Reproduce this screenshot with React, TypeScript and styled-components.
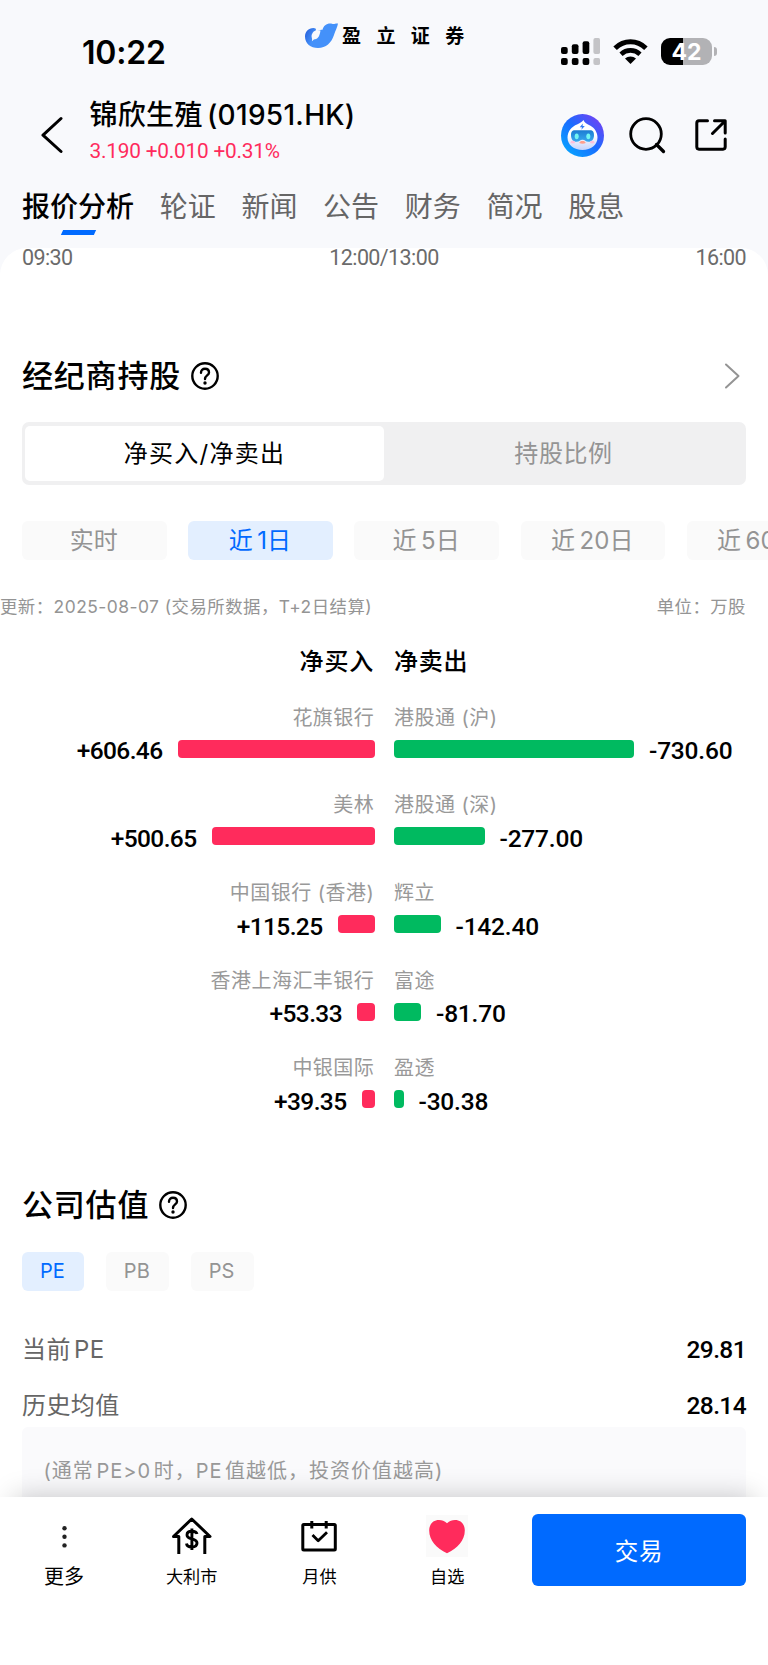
import React from 'react';
import styled, { createGlobalStyle, css } from 'styled-components';

const Global = createGlobalStyle`
  * { box-sizing: border-box; }
  html, body { margin: 0; padding: 0; background: #fff; }
  body {
    font-family: Inter, "Noto Sans CJK SC", sans-serif;
    color: #000;
    -webkit-font-smoothing: antialiased;
  }
  svg { display: block; flex: none; }
`;

const din = css`
  font-family: Roboto, "Noto Sans CJK SC", sans-serif;
`;

const Screen = styled.div`
  width: 768px;
  height: 1665px;
  display: flex;
  flex-direction: column;
  overflow: hidden;
  background: #f8f9fc;
`;

/* ---------- status bar ---------- */

const StatusBar = styled.header`
  height: 92px;
  flex: none;
  display: grid;
  grid-template-columns: 305px 1fr auto;
  padding-right: 51px;
`;

const Clock = styled.time`
  padding: 33px 0 0 82px;
  font-size: 32px;
  line-height: 40px;
  font-weight: 600;
  letter-spacing: -0.2px;
`;

const Brand = styled.div`
  display: flex;
  align-items: flex-start;
  gap: 3px;
  padding-top: 23px;
`;

const BrandName = styled.span`
  font-size: 19px;
  line-height: 28px;
  font-weight: 700;
  letter-spacing: 15.4px;
  white-space: nowrap;
`;

const StatusIcons = styled.div`
  display: flex;
  align-items: flex-start;
  padding-top: 38px;
`;

const WifiSlot = styled.div`
  margin: 1px 13px 0 13px;
`;

const Battery = styled.div`
  display: flex;
  align-items: center;
  gap: 2px;
  &::after {
    content: '';
    width: 3px;
    height: 9px;
    border-radius: 0 4px 4px 0;
    background: #b2b2b5;
  }
`;

const BatteryBody = styled.div`
  width: 51px;
  height: 27px;
  border-radius: 9px;
  background: linear-gradient(90deg, #000 43%, #b2b2b5 43%);
  color: #fff;
  font-size: 23px;
  line-height: 28px;
  font-weight: 700;
  text-align: center;
`;

/* ---------- title bar ---------- */

const TitleBar = styled.div`
  height: 88px;
  flex: none;
  display: flex;
  align-items: flex-start;
  padding: 0 41px;
`;

const BackSlot = styled.div`
  width: 48.5px;
  padding-top: 24px;
`;

const Stock = styled.div`
  flex: 1;
  padding-top: 3px;
`;

const StockName = styled.h1`
  margin: 0;
  font-size: 28px;
  line-height: 40px;
  font-weight: 500;
  word-spacing: -3.5px;
  letter-spacing: 0.3px;
`;

const Price = styled.div`
  ${din}
  margin-top: 3px;
  font-size: 20.8px;
  line-height: 26px;
  font-weight: 400;
  color: #ff2b5c;
  letter-spacing: -0.2px;
`;

const Actions = styled.div`
  display: flex;
  align-items: center;
  padding-top: 21.5px;
`;

const SearchSlot = styled.div`
  margin: 1px 29px 0 25px;
`;

/* ---------- tabs ---------- */

const Tabs = styled.nav`
  height: 68px;
  flex: none;
  display: flex;
  gap: 25.7px;
  padding: 7px 22px 0;
`;

const Tab = styled.a<{ $active?: boolean }>`
  display: flex;
  flex-direction: column;
  align-items: center;
  font-size: 28px;
  line-height: 40px;
  font-weight: ${p => (p.$active ? 500 : 400)};
  color: ${p => (p.$active ? '#000' : '#666')};
  white-space: nowrap;
`;

const TabMark = styled.span`
  width: 33px;
  height: 5px;
  margin: 3px 0 0 0;
  background: #006aff;
  transform: skewX(-24deg);
`;

/* ---------- content ---------- */

const Sheet = styled.main`
  flex: 1;
  min-height: 0;
  background: #fff;
  border-radius: 27px 27px 0 0;
  padding: 0 22px;
`;

const Axis = styled.div`
  ${din}
  height: 97px;
  display: grid;
  grid-template-columns: 1fr auto 1fr;
  font-size: 21.5px;
  line-height: 19px;
  color: #6b6b6b;
  letter-spacing: -0.6px;
  & > :last-child { text-align: right; }
`;

const SectionHead = styled.div<{ $pb: number }>`
  display: flex;
  align-items: center;
  height: ${p => 62 + p.$pb}px;
  padding: 0 6px ${p => p.$pb}px 0;
`;

const SectionTitle = styled.h2`
  margin: 0 10px 0 0;
  font-size: 31px;
  line-height: 44px;
  font-weight: 500;
  letter-spacing: 0.8px;
`;

const Spacer = styled.span`
  flex: 1;
`;

const Segments = styled.div`
  height: 63px;
  display: grid;
  grid-template-columns: 1fr 1fr;
  padding: 4px 3px;
  border-radius: 7px;
  background: #f0f0f1;
`;

const Segment = styled.button<{ $active?: boolean }>`
  border: 0;
  border-radius: 5px;
  background: ${p => (p.$active ? '#fff' : 'transparent')};
  color: ${p => (p.$active ? '#000' : '#949494')};
  font-family: inherit;
  font-size: 24px;
  padding: 0 0 4px;
  letter-spacing: ${p => (p.$active ? 1.3 : 0.6)}px;
`;

const Periods = styled.div`
  display: flex;
  gap: 21.7px;
  width: 746px;
  margin-top: 36px;
  overflow: hidden;
`;

const Chip = styled.button<{ $active?: boolean; $w: number; $fs?: number }>`
  flex: none;
  width: ${p => p.$w}px;
  height: 39px;
  padding: 0 1px 0 0;
  border: 0;
  border-radius: 6px;
  background: ${p => (p.$active ? '#e3efff' : '#fafafa')};
  color: ${p => (p.$active ? '#006aff' : '#949494')};
  font-family: inherit;
  font-size: ${p => p.$fs ?? 24}px;
  line-height: 39px;
  letter-spacing: 0.1px;
  word-spacing: -2.5px;
`;

const Meta = styled.div`
  display: flex;
  justify-content: space-between;
  margin: 34px 0 0 -22px;
  font-size: 17.4px;
  line-height: 26px;
  color: #949494;
  letter-spacing: 0.48px;
`;

const Holdings = styled.div`
  display: grid;
  grid-template-columns: 353px 353px;
  column-gap: 19px;
  margin: 24px 0 33px;
`;

const Column = styled.div<{ $side: 'buy' | 'sell' }>`
  display: flex;
  flex-direction: column;
  align-items: ${p => (p.$side === 'buy' ? 'flex-end' : 'flex-start')};
`;

const ColumnTitle = styled.h3`
  margin: 0 1px 22.9px 0;
  font-size: 24px;
  line-height: 36px;
  font-weight: 500;
  letter-spacing: 0.8px;
`;

const Holder = styled.div<{ $side: 'buy' | 'sell' }>`
  height: 87.6px;
  display: flex;
  flex-direction: column;
  align-items: ${p => (p.$side === 'buy' ? 'flex-end' : 'flex-start')};
`;

const HolderName = styled.div`
  height: 37px;
  margin-right: 0.7px;
  font-size: 20px;
  line-height: 30px;
  color: #999;
  letter-spacing: 0.48px;
`;

const BarLine = styled.div<{ $side: 'buy' | 'sell' }>`
  display: flex;
  flex-direction: ${p => (p.$side === 'buy' ? 'row-reverse' : 'row')};
  align-items: center;
  gap: 15px;
  height: 18px;
`;

const Bar = styled.div<{ $side: 'buy' | 'sell' }>`
  height: 18px;
  border-radius: 4px;
  background: ${p => (p.$side === 'buy' ? '#ff2b5c' : '#00ba60')};
`;

const Amount = styled.span<{ $side: 'buy' | 'sell' }>`
  ${din}
  padding-top: 5px;
  font-size: 24.5px;
  line-height: 24px;
  font-weight: 500;
  letter-spacing: ${p => (p.$side === 'buy' ? -0.6 : -0.2)}px;
`;

const Chips = styled.div`
  display: flex;
  gap: 21.8px;
`;

const StatRow = styled.div`
  display: flex;
  justify-content: space-between;
  align-items: center;
  height: 56px;
  font-size: 24px;
  color: #666;
  letter-spacing: 0.4px;
  word-spacing: -4px;
`;

const StatLabel = styled.span`
  padding-bottom: 5px;
`;

const Stats = styled.div`
  margin-top: 31px;
`;

const StatValue = styled.b`
  ${din}
  font-weight: 500;
  font-size: 24.5px;
  color: #000;
  letter-spacing: -0.6px;
`;

const Note = styled.p`
  margin: -7px 0 0;
  height: 90px;
  padding: 27px 21.5px;
  border-radius: 6px;
  background: #fafafc;
  color: #999;
  font-size: 20px;
  line-height: 34px;
  letter-spacing: 1px;
  word-spacing: -4px;
  white-space: nowrap;
`;

/* ---------- bottom bar ---------- */

const BottomBar = styled.footer`
  position: relative;
  flex: none;
  height: 168px;
  display: flex;
  align-items: flex-start;
  padding-right: 22px;
  background: #fff;
  box-shadow: 0 -14px 26px -14px rgba(0, 0, 0, 0.22);
`;

const Action = styled.div`
  width: 127.8px;
  display: flex;
  flex-direction: column;
  align-items: center;
  padding-top: 17.5px;
`;

const ActionIcon = styled.div<{ $tinted?: boolean }>`
  width: 42px;
  height: 42px;
  background: ${p => (p.$tinted ? '#fafafa' : 'transparent')};
`;

const ActionLabel = styled.span<{ $large?: boolean }>`
  margin-top: 6px;
  font-size: ${p => (p.$large ? 20 : 17.2)}px;
  line-height: 28px;
`;

const TradeButton = styled.button`
  width: 214px;
  height: 72px;
  margin: 17px 0 0 auto;
  padding: 0;
  border: 0;
  border-radius: 6px;
  background: #006aff;
  color: #fff;
  font-family: inherit;
  font-size: 23.5px;
  font-weight: 400;
  letter-spacing: 0.8px;
`;

/* ---------- icons ---------- */

const BrandMark = () => (
  <svg width="34" height="26" viewBox="0 0 34 26">
    <defs>
      <linearGradient id="wing" x1="0" y1="0" x2="0.42" y2="0.15">
        <stop offset="0" stopColor="#1f4fd0" />
        <stop offset="0.5" stopColor="#3272e6" />
        <stop offset="1" stopColor="#4491fa" />
      </linearGradient>
    </defs>
    <path d="M8.500 5C3.300 5 0 8.800 0 13.500C0 20.600 5.600 25 13 25C21 25 26.500 19.500 28.800 12.500C30.300 8 32.600 3.600 33 .6C31 -.2 29.500 1.500 27 .8C22.500 -.2 18.500 2.500 17.500 6.800C15 6.800 13.500 7.800 12.500 7.500C11.500 6 10.200 5 8.500 5Z" fill="url(#wing)" />
    <path d="M7.200 10.800C8 8.800 9.400 8 10.500 7.800L11.300 5.200L13 7.200L15.500 7.400C14.800 11.300 14 15.600 9.800 16.200C8.500 16.500 8 17.500 6.900 18.200C7.900 15.500 5.500 13.500 7.200 10.800Z" fill="#f8f9fc" />
  </svg>
);

const Signal = () => (
  <svg width="39" height="27" viewBox="0 0 39 27">
    {[0, 1, 2, 3].map(i => (
      <g key={i} fill={i === 3 ? '#c4c4c7' : '#000'}>
        <rect x={i * 10.8} y={[9, 6.2, 3.2, 0][i]} width="6.700" height={[7, 9.8, 12.800, 16][i]} rx="2" />
        <rect x={i * 10.800} y="20" width="6.700" height="7" rx="2" />
      </g>
    ))}
  </svg>
);

const Wifi = () => (
  <svg width="35" height="25" viewBox="0 0 35 25">
    <path d="M2.100 9.200C11 .6 24 .6 32.900 9.200" fill="none" stroke="#000" strokeWidth="5" />
    <path d="M8 15.200C13.500 10.100 21.500 10.100 27 15.200" fill="none" stroke="#000" strokeWidth="4.600" />
    <path d="M17.500 25L12 19.500C15 16.800 20 16.800 23 19.500Z" fill="#000" />
  </svg>
);

const Back = () => (
  <svg width="22" height="38" viewBox="0 0 22 38" fill="none" stroke="#000" strokeWidth="3" strokeLinecap="round" strokeLinejoin="round">
    <path d="M20 2.500L2 19.200L20 35.500" />
  </svg>
);

const Robot = () => (
  <svg width="43" height="43" viewBox="0 0 43 43">
    <defs>
      <linearGradient id="disc" x1="0.15" y1="0.85" x2="0.85" y2="0.1">
        <stop offset="0" stopColor="#0a9dff" />
        <stop offset="0.5" stopColor="#1a6cff" />
        <stop offset="1" stopColor="#6a45f5" />
      </linearGradient>
      <linearGradient id="face" x1="0" y1="0" x2="0" y2="1">
        <stop offset="0.5" stopColor="#fff" />
        <stop offset="1" stopColor="#c5d3fb" />
      </linearGradient>
      <linearGradient id="visor" x1="0" y1="0" x2="0" y2="1">
        <stop offset="0" stopColor="#1c7cd2" />
        <stop offset="1" stopColor="#39a9ee" />
      </linearGradient>
    </defs>
    <circle cx="21.500" cy="21.500" r="21.500" fill="url(#disc)" />
    <path d="M22.500 6C23.200 8.800 26 9.800 29.500 11.800C33.500 14 36.500 18.500 36.500 23.500C36.500 31 30 36 21.500 36C13 36 6.500 31 6.500 23.500C6.500 17 11 12.500 16 10.500C19 9.300 20.500 8 22.500 6Z" fill="url(#face)" />
    <path d="M21.800 9.500L18.800 13.200H21L20.400 15.800L23.800 12H21.600Z" fill="#317cf5" />
    <path d="M14 16.200H29C32 16.200 33 18.200 33 21C33 25 31 27.800 27.500 27.800C24.500 27.800 24 25.800 21.500 25.800C19 25.800 18.500 27.800 15.500 27.800C12 27.800 10 25 10 21C10 18.200 11 16.200 14 16.200Z" fill="url(#visor)" />
    <ellipse cx="15.700" cy="22.300" rx="2" ry="2.900" fill="#73f5f2" />
    <ellipse cx="27.300" cy="22.300" rx="2" ry="2.900" fill="#73f5f2" />
    <ellipse cx="11.800" cy="28.200" rx="2.200" ry="1.400" fill="#ffc0dc" />
    <ellipse cx="31.200" cy="28.200" rx="2.200" ry="1.400" fill="#ffc0dc" />
    <path d="M18.300 29C18.800 27.200 20.500 26.800 21.500 27C22.500 26.800 24.200 27.200 24.700 29C23 30 20 30 18.300 29Z" fill="#ff9f8c" />
  </svg>
);

const Search = () => (
  <svg width="37" height="37" viewBox="0 0 37 37" fill="none" stroke="#000" strokeWidth="2.800" strokeLinecap="round">
    <circle cx="17" cy="17" r="15.300" />
    <path d="M27.500 27.500L34.500 34.500" strokeWidth="3.300" />
  </svg>
);

const Share = () => (
  <svg width="32" height="32" viewBox="0 0 32 32" fill="none" stroke="#000" strokeWidth="3" strokeLinecap="round" strokeLinejoin="round">
    <path d="M12.500 1.800H4A2.300 2.300 0 0 0 1.800 4V28A2.300 2.300 0 0 0 4 30.200H28A2.300 2.300 0 0 0 30.200 28V20" />
    <path d="M19.500 1.800H30.200V14M30 2L17.500 14.500" />
  </svg>
);

const Help = () => (
  <svg width="28" height="28" viewBox="0 0 28 28" fill="none" stroke="#000" strokeWidth="2.400" strokeLinecap="round">
    <circle cx="14" cy="14" r="12.700" />
    <path d="M10 10.800C10 8.300 11.700 6.800 14 6.800C16.300 6.800 18 8.300 18 10.500C18 13.400 14 13.500 14 17" />
    <circle cx="14" cy="21" r="1.700" fill="#000" stroke="none" />
  </svg>
);

const More = () => (
  <svg width="16" height="26" viewBox="0 0 16 26" fill="none" stroke="#949494" strokeWidth="2" strokeLinecap="round" strokeLinejoin="round">
    <path d="M2 1.500L14.500 13L2 24.500" />
  </svg>
);

const Dots = () => (
  <svg width="42" height="42" viewBox="0 0 42 42" fill="#222">
    {[13.200, 21.800, 30.400].map(y => (
      <circle key={y} cx="21.500" cy={y} r="2.200" />
    ))}
  </svg>
);

const House = () => (
  <svg width="42" height="42" viewBox="0 0 42 42" fill="none" stroke="#000" strokeWidth="3" strokeLinejoin="round">
    <path d="M7.800 39V21.500H2.500L20.700 4L39 21.500H33.800V39" />
    <path d="M26 19C25.500 17 23.500 16.300 20.800 16.300C17.800 16.300 16 17.600 16 19.900C16 25.400 26 22.400 26 28C26 30.600 23.800 32 20.800 32C17.800 32 15.800 31 15.500 28.500M20.900 13.500V35" strokeWidth="2.900" />
  </svg>
);

const Calendar = () => (
  <svg width="42" height="42" viewBox="0 0 42 42" fill="none" stroke="#000" strokeWidth="3" strokeLinejoin="round">
    <rect x="4.800" y="9.500" width="32.500" height="25.500" rx="1" />
    <path d="M13.800 6V13.500M28.200 6V13.500" />
    <path d="M14.500 20L20.200 25.700L29 17.200" strokeWidth="2.800" />
  </svg>
);

const Heart = () => (
  <svg width="42" height="42" viewBox="0 0 42 42">
    <path d="M21 8.200C18.500 5.900 15.800 5 13 5C7 5 3.200 9.300 3.200 15.500C3.200 25.500 10.500 33.500 21 38.300C31.500 33.500 38.800 25.500 38.800 15.500C38.800 9.300 35 5 29 5C26.200 5 23.500 5.900 21 8.200Z" fill="#ff2b5c" />
  </svg>
);

/* ---------- data ---------- */

type Entry = { name: string; amount: string; width: number };

const buyers: Entry[] = [
  { name: '花旗银行', amount: '+606.46', width: 197.5 },
  { name: '美林', amount: '+500.65', width: 163.5 },
  { name: '中国银行 (香港)', amount: '+115.25', width: 37.5 },
  { name: '香港上海汇丰银行', amount: '+53.33', width: 18 },
  { name: '中银国际', amount: '+39.35', width: 13.5 },
];

const sellers: Entry[] = [
  { name: '港股通 (沪)', amount: '-730.60', width: 240 },
  { name: '港股通 (深)', amount: '-277.00', width: 90.5 },
  { name: '辉立', amount: '-142.40', width: 46.5 },
  { name: '富途', amount: '-81.70', width: 27 },
  { name: '盈透', amount: '-30.38', width: 9.5 },
];

const tabs = ['报价分析', '轮证', '新闻', '公告', '财务', '简况', '股息'];
const periods = ['实时', '近 1日', '近 5日', '近 20日', '近 60日'];

const HoldingColumn = ({ side, title, entries }: { side: 'buy' | 'sell'; title: string; entries: Entry[] }) => (
  <Column $side={side}>
    <ColumnTitle>{title}</ColumnTitle>
    {entries.map(e => (
      <Holder key={e.name} $side={side}>
        <HolderName>{e.name}</HolderName>
        <BarLine $side={side}>
          <Bar $side={side} style={{ width: e.width }} />
          <Amount $side={side}>{e.amount}</Amount>
        </BarLine>
      </Holder>
    ))}
  </Column>
);

export default function App() {
  return (
    <>
      <Global />
      <Screen>
        <StatusBar>
          <Clock>10:22</Clock>
          <Brand>
            <BrandMark />
            <BrandName>盈立证券</BrandName>
          </Brand>
          <StatusIcons>
            <Signal />
            <WifiSlot><Wifi /></WifiSlot>
            <Battery><BatteryBody>42</BatteryBody></Battery>
          </StatusIcons>
        </StatusBar>

        <TitleBar>
          <BackSlot><Back /></BackSlot>
          <Stock>
            <StockName>锦欣生殖 (01951.HK)</StockName>
            <Price>3.190 +0.010 +0.31%</Price>
          </Stock>
          <Actions>
            <Robot />
            <SearchSlot><Search /></SearchSlot>
            <Share />
          </Actions>
        </TitleBar>

        <Tabs>
          {tabs.map((t, i) => (
            <Tab key={t} $active={i === 0}>
              {t}
              {i === 0 && <TabMark />}
            </Tab>
          ))}
        </Tabs>

        <Sheet>
          <Axis>
            <span>09:30</span>
            <span>12:00/13:00</span>
            <span>16:00</span>
          </Axis>

          <SectionHead $pb={15}>
            <SectionTitle>经纪商持股</SectionTitle>
            <Help />
            <Spacer />
            <More />
          </SectionHead>
          <Segments>
            <Segment $active>净买入/净卖出</Segment>
            <Segment>持股比例</Segment>
          </Segments>
          <Periods>
            {periods.map((p, i) => (
              <Chip key={p} $w={144.5} $active={i === 1}>{p}</Chip>
            ))}
          </Periods>
          <Meta>
            <span>更新：2025-08-07 (交易所数据，T+2日结算)</span>
            <span>单位：万股</span>
          </Meta>
          <Holdings>
            <HoldingColumn side="buy" title="净买入" entries={buyers} />
            <HoldingColumn side="sell" title="净卖出" entries={sellers} />
          </Holdings>

          <SectionHead $pb={16}>
            <SectionTitle>公司估值</SectionTitle>
            <Help />
          </SectionHead>
          <Chips>
            <Chip $w={62} $fs={20} $active>PE</Chip>
            <Chip $w={63} $fs={20}>PB</Chip>
            <Chip $w={63} $fs={20}>PS</Chip>
          </Chips>
          <Stats>
            <StatRow><StatLabel>当前 PE</StatLabel><StatValue>29.81</StatValue></StatRow>
            <StatRow><StatLabel>历史均值</StatLabel><StatValue>28.14</StatValue></StatRow>
          </Stats>
          <Note>(通常 PE&gt;0 时，PE 值越低，投资价值越高)</Note>
        </Sheet>

        <BottomBar>
          <Action>
            <ActionIcon><Dots /></ActionIcon>
            <ActionLabel $large>更多</ActionLabel>
          </Action>
          <Action>
            <ActionIcon><House /></ActionIcon>
            <ActionLabel>大利市</ActionLabel>
          </Action>
          <Action>
            <ActionIcon><Calendar /></ActionIcon>
            <ActionLabel>月供</ActionLabel>
          </Action>
          <Action>
            <ActionIcon $tinted><Heart /></ActionIcon>
            <ActionLabel>自选</ActionLabel>
          </Action>
          <TradeButton>交易</TradeButton>
        </BottomBar>
      </Screen>
    </>
  );
}
